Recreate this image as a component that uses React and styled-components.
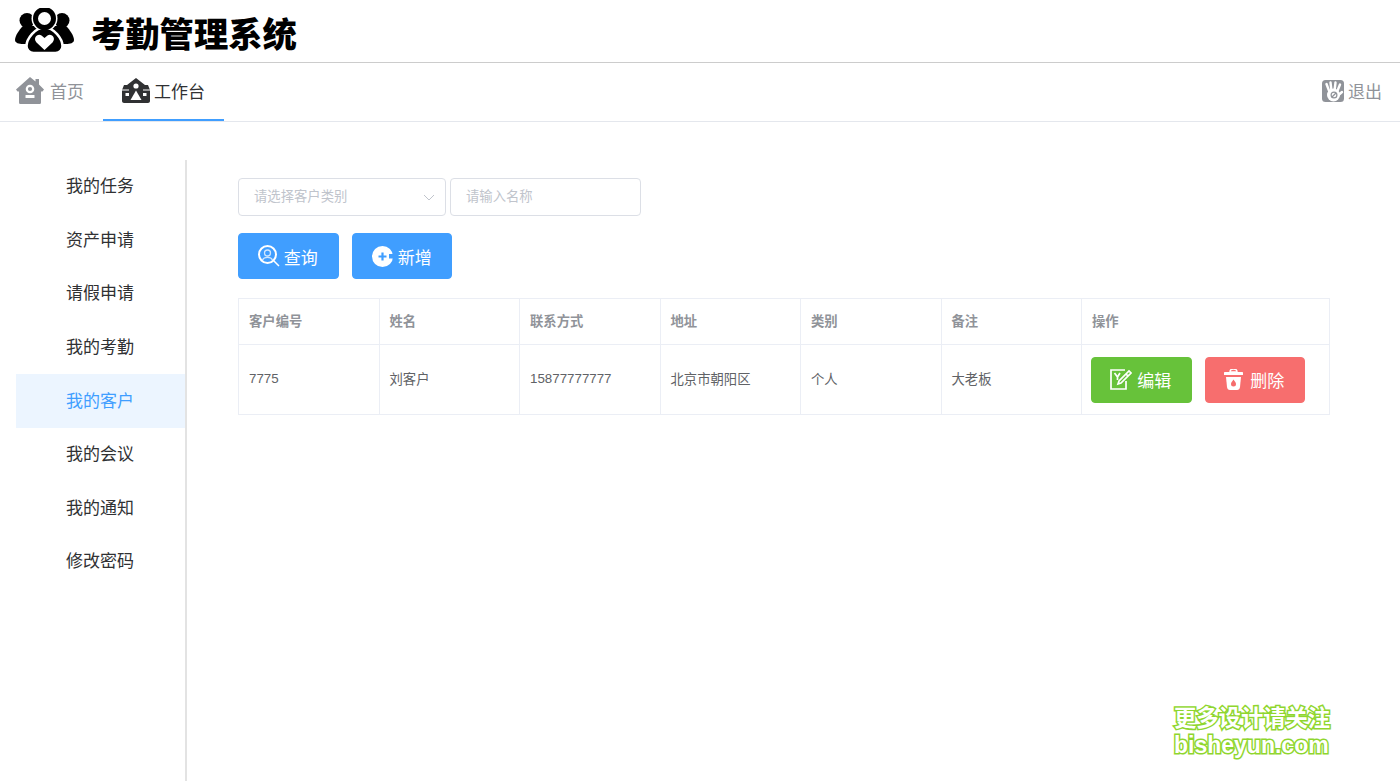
import React from "react";
import styled, { createGlobalStyle } from "styled-components";

const Global = createGlobalStyle`
  html, body { margin: 0; padding: 0; background: #fff; }
  body { font-family: "Liberation Sans", "Noto Sans CJK SC", sans-serif; }
  * { box-sizing: border-box; }
`;

const Page = styled.div`
  position: relative;
  width: 100%;
  height: 100vh;
  overflow: hidden;
  display: flex;
  flex-direction: column;
`;
const Header = styled.header`
  height: 63px;
  flex: none;
  display: flex;
  align-items: center;
  padding-left: 15px;
  border-bottom: 1px solid #ccc;
`;
const Title = styled.h1`
  margin: 8px 0 0 16px;
  font-size: 34.3px;
  line-height: 40px;
  font-weight: 900;
  color: #000;
`;
const Nav = styled.nav`
  height: 59px;
  flex: none;
  display: flex;
  align-items: stretch;
  padding: 0 18px 0 16px;
  border-bottom: 1px solid #e4e7ed;
`;
const Tab = styled.a`
  display: flex;
  align-items: center;
  gap: ${(p) => p.$gap || 6}px;
  padding: ${(p) => p.$pad || "0 0 1px"};
  margin: ${(p) => p.$margin || "0"};
  font-size: 17px;
  color: ${(p) => (p.$active ? "#303133" : "#909399")};
  border-bottom: 2px solid ${(p) => (p.$active ? "#409eff" : "transparent")};
`;
const Body = styled.div`
  flex: 1;
  display: flex;
  min-height: 0;
`;
const Side = styled.aside`
  width: 171px;
  flex: none;
  margin: 38px 0 0 16px;
  border-right: 2px solid #e3e3e3;
`;
const MenuItem = styled.div`
  height: 53.6px;
  line-height: 53.6px;
  padding: 0.25px 0 0 50px;
  font-size: 17px;
  color: ${(p) => (p.$active ? "#409eff" : "#303133")};
  background: ${(p) => (p.$active ? "#ecf5ff" : "transparent")};
`;
const Content = styled.main`
  width: 1092px;
  margin: 56px 0 0 51px;
`;
const Filters = styled.div`
  display: flex;
  gap: 4px;
`;
const Field = styled.div`
  position: relative;
  width: ${(p) => p.$w}px;
  height: 38px;
  padding: 0 0 3px 15px;
  display: flex;
  align-items: center;
  justify-content: space-between;
  border: 1px solid #dcdfe6;
  border-radius: 4px;
  font-size: 13.33px;
  color: #c0c4cc;
`;
const Caret = styled.svg`
  width: 12px;
  height: 12px;
  margin: 3px 10px 0 0;
`;
const Actions = styled.div`
  display: flex;
  gap: 13px;
  margin: 17px 0 19px;
`;
const Btn = styled.button`
  width: 100.5px;
  height: 46px;
  padding: 0 ${(p) => p.$pr ?? 1}px 0 0;
  display: inline-flex;
  align-items: center;
  justify-content: center;
  gap: ${(p) => p.$gap ?? 4}px;
  border: 1px solid ${(p) => p.$bg};
  border-radius: 4px;
  background: ${(p) => p.$bg};
  color: #fff;
  font: inherit;
  font-size: 17px;
`;
const Table = styled.table`
  width: 1091px;
  table-layout: fixed;
  border-collapse: collapse;
  font-size: 13.33px;
`;
const Col = styled.col`
  width: ${(p) => p.$w}px;
`;
const Th = styled.th`
  height: 46px;
  padding: 0 10px 2px;
  text-align: left;
  font-weight: 700;
  color: #909399;
  border: 1px solid #ebeef5;
`;
const Td = styled.td`
  height: 70px;
  padding: 0 10px 2px;
  color: #606266;
  border: 1px solid #ebeef5;
`;
const ActionCell = styled(Td)`
  padding: 0 9px;
`;
const RowActions = styled.div`
  display: flex;
  gap: 13px;
`;
const Watermark = styled.div`
  position: absolute;
  left: 1174px;
  top: 705px;
  width: 160px;
  font-weight: 700;
  font-size: 22.3px;
  line-height: 27px;
  color: #fff;
  white-space: nowrap;
  -webkit-text-stroke: 3px #8fd62e;
  paint-order: stroke fill;
`;
const WatermarkLatin = styled.div`
  font-size: 23px;
  line-height: 26px;
`;

const Logo = () => (
  <svg width="60" height="46" viewBox="0 0 60 46">
    <circle cx="12" cy="12.500" r="7.500" fill="#000" />
    <circle cx="47" cy="12.500" r="7.500" fill="#000" />
    <path d="M8 18C4 22 0 28 0 32c0 3 4 4 8 4h43c4 0 8-1 8-4 0-4-4-10-8-14z" fill="#000" />
    <circle cx="29.500" cy="10.500" r="13" fill="#fff" />
    <path d="M29.500 19.500C20 19.500 11.500 31 11.500 38c0 4 3 7 7 7h22c4 0 7-3 7-7 0-7-8.500-18.500-18-18.500z" fill="#000" stroke="#fff" strokeWidth="2.500" />
    <circle cx="29.500" cy="10.500" r="9" fill="#fff" stroke="#000" strokeWidth="5" />
    <path d="M29.500 42l-8-7.500c-4-4.500 1-9.500 5-7l3 2.500 3-2.500c4-2.500 9 2.500 5 7z" fill="#fff" />
  </svg>
);
const HomeIcon = () => (
  <svg width="28" height="27" viewBox="0 0 28 27">
    <path fill="#909399" d="M14 0l5.500 4.500V2H23v5.500l5 5-1.500 2H25v11c0 1-.8 1.500-1.500 1.500h-19C3.800 27 3 26.500 3 25.500v-11H1.500l-1.500-2z" />
    <circle cx="14" cy="12" r="3.200" fill="none" stroke="#fff" strokeWidth="2.200" />
    <rect x="9.500" y="18" width="9" height="3" rx="0.500" fill="#fff" />
  </svg>
);
const WorkIcon = () => (
  <svg width="28" height="25" viewBox="0 0 28 25">
    <path fill="#303133" d="M14 0l9 7h3l2 5v11c0 1-1 2-2 2H2c-1 0-2-1-2-2V12l2-5h3z" />
    <circle cx="14" cy="8" r="2.600" fill="#fff" />
    <path d="M0 12h7M21 12h7" stroke="#fff" strokeWidth="1" />
    <path d="M14 12.500l5.500 9.500h-11z" fill="#fff" />
    <rect x="3.500" y="15" width="3.500" height="3" fill="#fff" />
    <rect x="21" y="15" width="3.500" height="3" fill="#fff" />
  </svg>
);
const ExitIcon = () => (
  <svg width="22" height="22" viewBox="0 0 22 22">
    <rect width="22" height="22" rx="3.500" fill="#909399" />
    <g stroke="#fff" strokeWidth="2.400" strokeLinecap="round" fill="none">
      <path d="M7.500 12L4.500 4" />
      <path d="M9.500 11L8.500 2.500" />
      <path d="M12.500 11L13.500 2.500" />
      <path d="M15 12l3-7.500" />
      <path d="M16 15.500l4-3.500" />
    </g>
    <circle cx="11.500" cy="15" r="6.500" fill="#fff" />
    <circle cx="12" cy="15" r="2.900" fill="#fff" stroke="#909399" strokeWidth="1.200" />
    <path d="M10 17l4-4" stroke="#909399" strokeWidth="1.200" />
  </svg>
);
const SearchIcon = () => (
  <svg width="22" height="22" viewBox="0 0 22 22" fill="none" stroke="#fff">
    <circle cx="9.500" cy="9.500" r="8.500" strokeWidth="2" />
    <circle cx="9.500" cy="8" r="3" strokeWidth="1.300" opacity="0.75" />
    <path d="M4.500 15c1.500-3.500 8.500-3.500 10 0" strokeWidth="1.300" opacity="0.75" />
    <path d="M16 16l5 5" strokeWidth="1.500" />
  </svg>
);
const AddIcon = () => (
  <svg width="21" height="21" viewBox="0 0 21 21">
    <circle cx="10.500" cy="10.500" r="10.500" fill="#fff" />
    <path d="M6.500 10.500h8M10.500 6.500v8" stroke="#409eff" strokeWidth="2.200" />
    <rect x="17" y="8" width="4" height="4.500" fill="#409eff" />
  </svg>
);
const EditIcon = () => (
  <svg width="22" height="21" viewBox="0 0 22 21" fill="none" stroke="#fff" strokeWidth="1.700">
    <path d="M15 1H1v19h15v-8" />
    <path d="M4.500 4l3 4 2.500-4M7.500 8v3" />
    <path d="M8 15l1-3L19 2l2 2L11 14z" />
    <path d="M16 5l2 2" />
  </svg>
);
const TrashIcon = () => (
  <svg width="19" height="21" viewBox="0 0 19 21">
    <path d="M6 3c0-2 1-3 3.500-3S13 1 13 3z" fill="none" stroke="#fff" strokeWidth="1.500" />
    <path d="M1 3h17c.6 0 1 .4 1 1v2H0V4c0-.6.400-1 1-1z" fill="#fff" />
    <path d="M2 8h15l-1 10c-.2 1.700-1.300 3-3 3H6c-1.700 0-2.800-1.300-3-3z" fill="#fff" />
    <path d="M9.500 10.500c1.500 2 2.500 3.300 2.500 4.500a2.500 2.500 0 0 1-5 0c0-1.200 1-2.500 2.500-4.500z" fill="#f56c6c" />
  </svg>
);

const menu = ["我的任务", "资产申请", "请假申请", "我的考勤", "我的客户", "我的会议", "我的通知", "修改密码"];
const heads = ["客户编号", "姓名", "联系方式", "地址", "类别", "备注", "操作"];
const row = ["7775", "刘客户", "15877777777", "北京市朝阳区", "个人", "大老板"];
const widths = [140.5, 140.5, 140.5, 140.5, 140.5, 140.5, 248];

export default function App() {
  return (
    <Page>
      <Global />
      <Header>
        <Logo />
        <Title>考勤管理系统</Title>
      </Header>
      <Nav>
        <Tab>
          <HomeIcon />
          首页
        </Tab>
        <Tab $active $gap={4} $pad="0 19px 1px" $margin="0 0 0 19px">
          <WorkIcon />
          工作台
        </Tab>
        <Tab $gap={4} $margin="0 0 0 auto">
          <ExitIcon />
          退出
        </Tab>
      </Nav>
      <Body>
        <Side>
          {menu.map((m) => (
            <MenuItem key={m} $active={m === "我的客户"}>
              {m}
            </MenuItem>
          ))}
        </Side>
        <Content>
          <Filters>
            <Field $w={208}>
              请选择客户类别
              <Caret viewBox="0 0 12 12" fill="none" stroke="#c0c4cc" strokeWidth="1">
                <path d="M1 4l5 5 5-5" />
              </Caret>
            </Field>
            <Field $w={191}>请输入名称</Field>
          </Filters>
          <Actions>
            <Btn $bg="#409eff">
              <SearchIcon />
              查询
            </Btn>
            <Btn $bg="#409eff" $gap={5} $pr={0}>
              <AddIcon />
              新增
            </Btn>
          </Actions>
          <Table>
            <colgroup>
              {widths.map((w, i) => (
                <Col key={i} $w={w} />
              ))}
            </colgroup>
            <thead>
              <tr>
                {heads.map((h) => (
                  <Th key={h}>{h}</Th>
                ))}
              </tr>
            </thead>
            <tbody>
              <tr>
                {row.map((c) => (
                  <Td key={c}>{c}</Td>
                ))}
                <ActionCell>
                  <RowActions>
                    <Btn $bg="#67c23a" $gap={5}>
                      <EditIcon />
                      编辑
                    </Btn>
                    <Btn $bg="#f76e6e" $gap={7}>
                      <TrashIcon />
                      删除
                    </Btn>
                  </RowActions>
                </ActionCell>
              </tr>
            </tbody>
          </Table>
        </Content>
      </Body>
      <Watermark>
        更多设计请关注
        <WatermarkLatin>bisheyun.com</WatermarkLatin>
      </Watermark>
    </Page>
  );
}
